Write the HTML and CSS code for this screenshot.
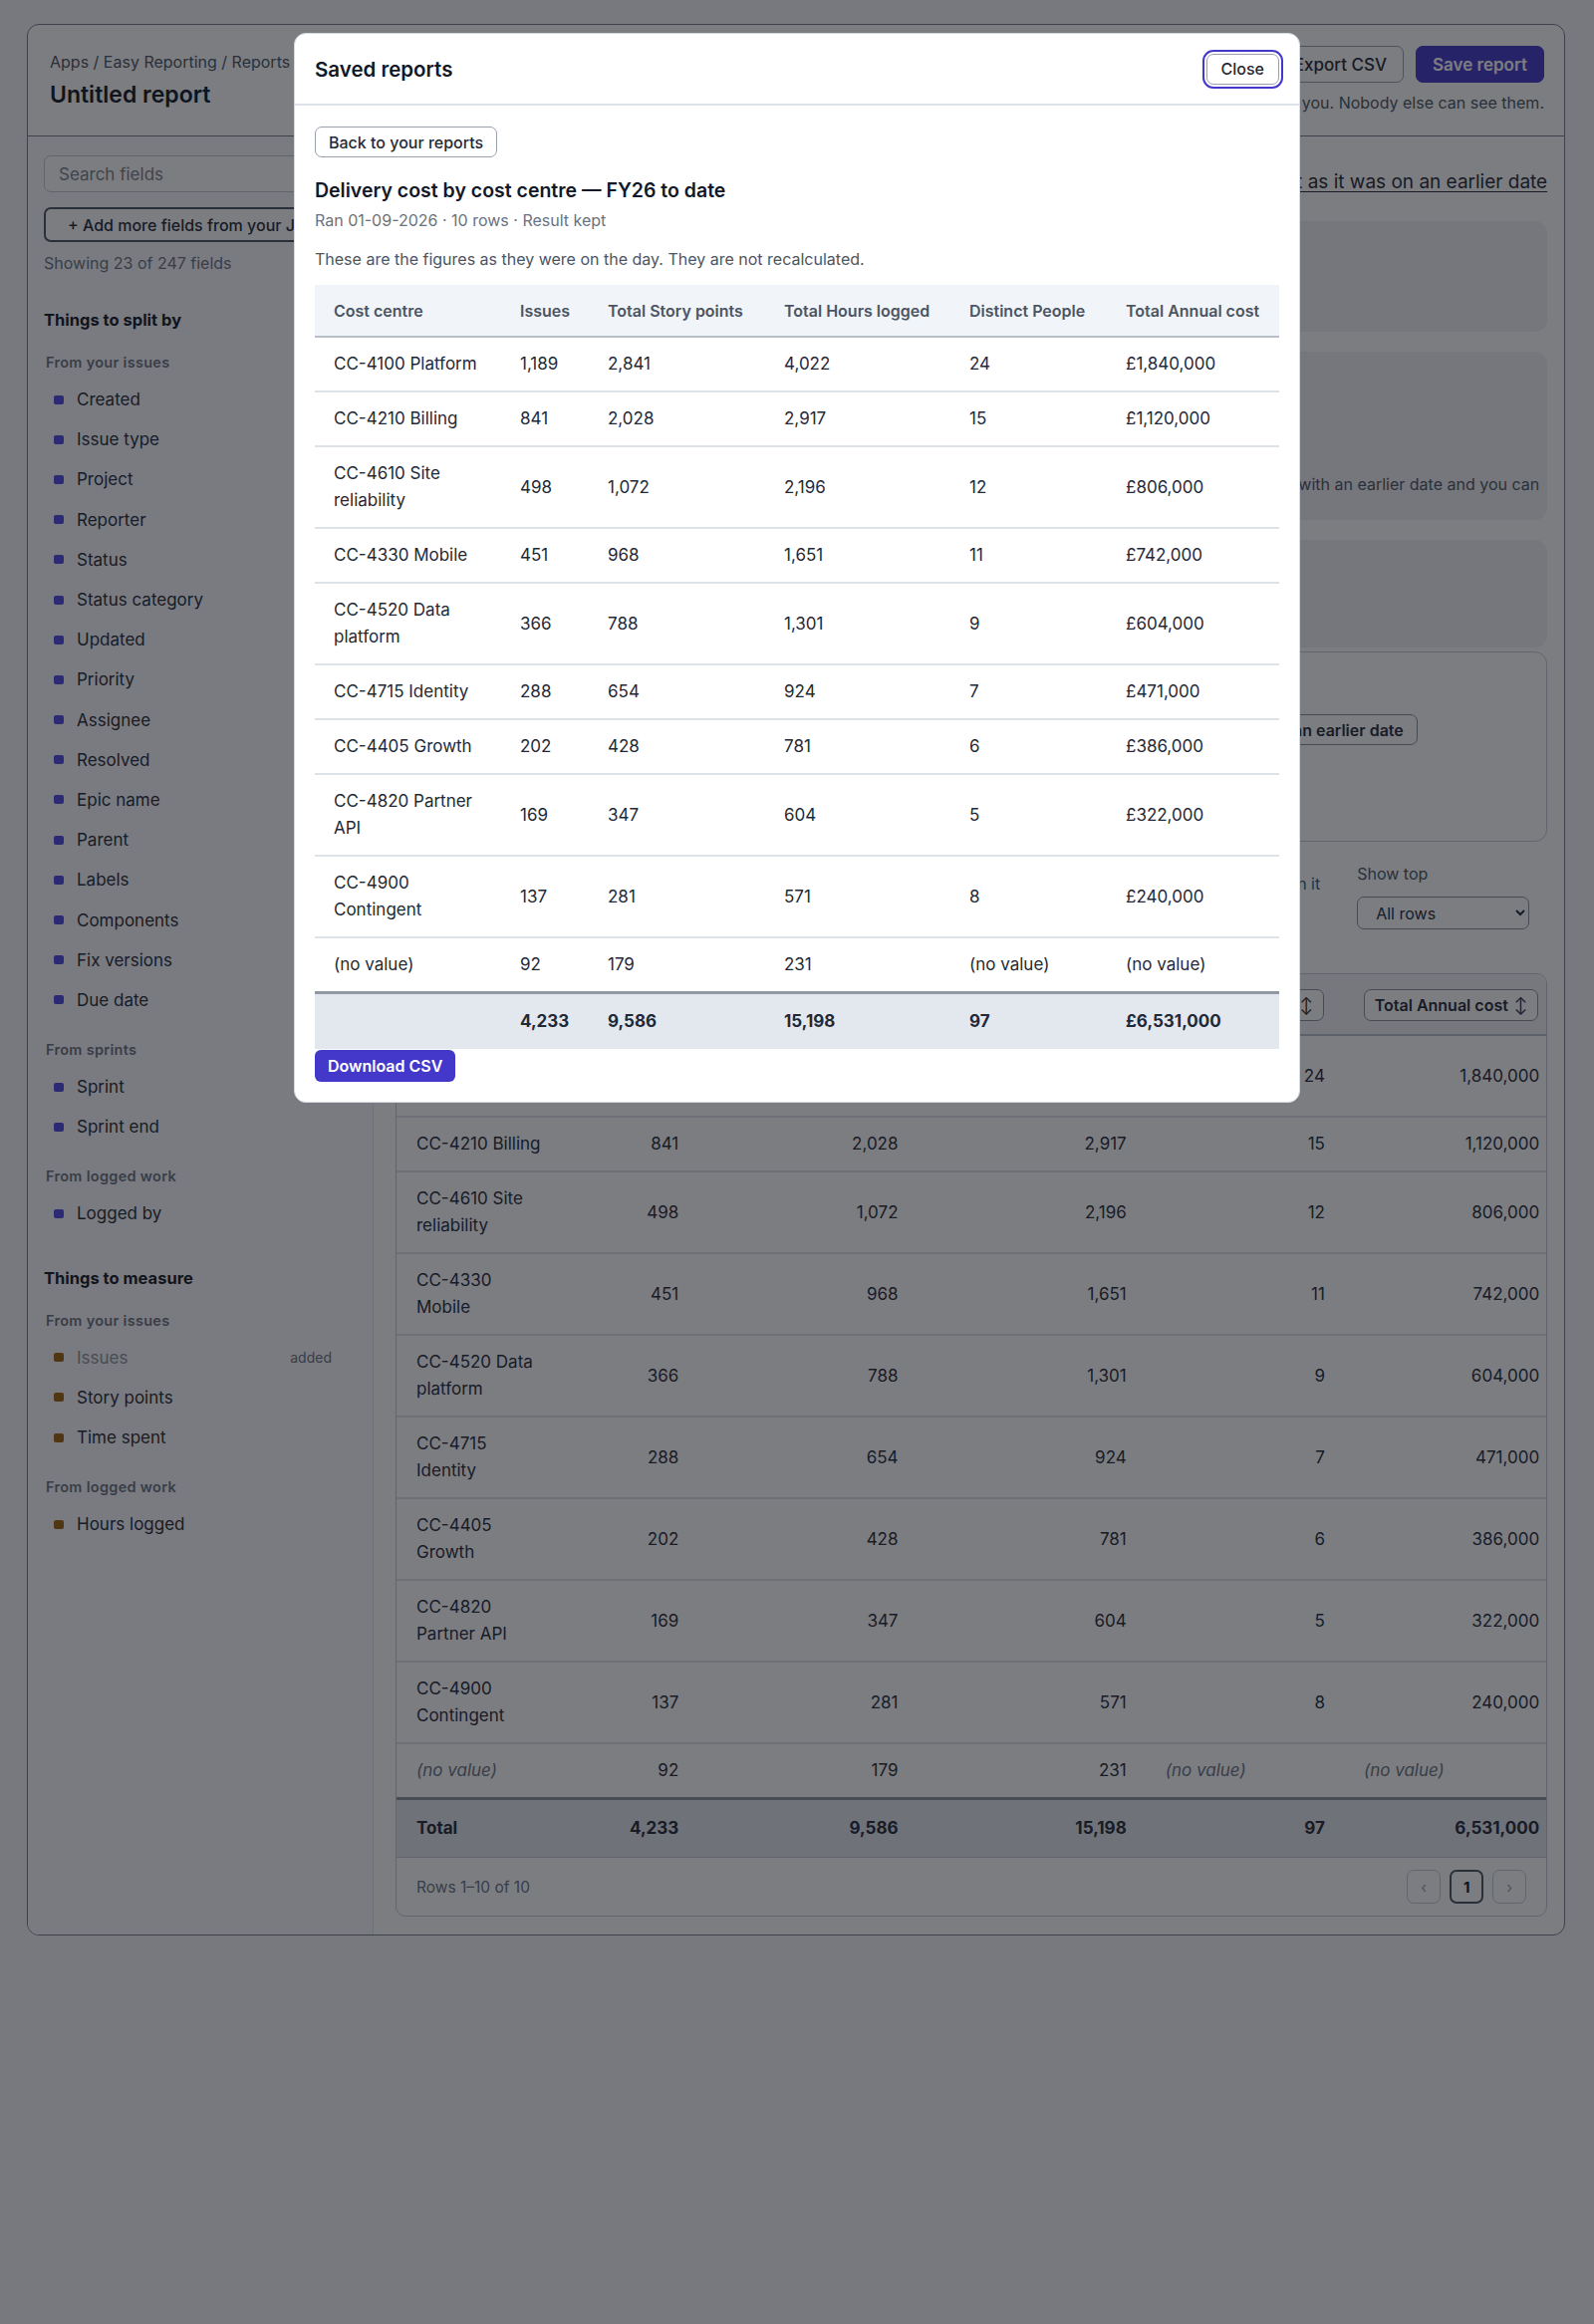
FILE: index.html
```html
<!DOCTYPE html>
<html lang="en">
<head>
    <meta charset="UTF-8">
    <meta name="viewport" content="width=device-width, initial-scale=1.0">
    <title>Untitled report - Easy Reporting</title>
    <link rel="stylesheet" href="styles.css">
</head>
<body>
    <div class="app">
        <header class="app-head">
            <div class="head-left">
                <div class="crumbs">Apps / Easy Reporting / Reports</div>
                <h1>Untitled report</h1>
            </div>
            <div class="head-right">
                <div class="head-actions">
                    <button class="btn">Saved reports</button>
                    <button class="btn">Export CSV</button>
                    <button class="btn btn-primary">Save report</button>
                </div>
                <p class="head-note">Saved reports are only visible to you. Nobody else can see them.</p>
            </div>
        </header>

        <div class="app-body">
            <aside class="fields">
                <input class="search" type="text" placeholder="Search fields">
                <button class="add-fields">+ Add more fields from your Jira site</button>
                <p class="field-count">Showing 23 of 247 fields</p>

                <section class="field-section">
                    <h3>Things to split by</h3>
                    <h4>From your issues</h4>
                    <ul class="field-list split">
                        <li><span class="dot"></span>Created</li>
                        <li><span class="dot"></span>Issue type</li>
                        <li><span class="dot"></span>Project</li>
                        <li><span class="dot"></span>Reporter</li>
                        <li><span class="dot"></span>Status</li>
                        <li><span class="dot"></span>Status category</li>
                        <li><span class="dot"></span>Updated</li>
                        <li><span class="dot"></span>Priority</li>
                        <li><span class="dot"></span>Assignee</li>
                        <li><span class="dot"></span>Resolved</li>
                        <li><span class="dot"></span>Epic name</li>
                        <li><span class="dot"></span>Parent</li>
                        <li><span class="dot"></span>Labels</li>
                        <li><span class="dot"></span>Components</li>
                        <li><span class="dot"></span>Fix versions</li>
                        <li><span class="dot"></span>Due date</li>
                    </ul>
                    <h4>From sprints</h4>
                    <ul class="field-list split">
                        <li><span class="dot"></span>Sprint</li>
                        <li><span class="dot"></span>Sprint end</li>
                    </ul>
                    <h4>From logged work</h4>
                    <ul class="field-list split">
                        <li><span class="dot"></span>Logged by</li>
                    </ul>
                </section>

                <section class="field-section">
                    <h3>Things to measure</h3>
                    <h4>From your issues</h4>
                    <ul class="field-list measure">
                        <li class="is-added"><span class="dot"></span>Issues<span class="added">added</span></li>
                        <li><span class="dot"></span>Story points</li>
                        <li><span class="dot"></span>Time spent</li>
                    </ul>
                    <h4>From logged work</h4>
                    <ul class="field-list measure">
                        <li><span class="dot"></span>Hours logged</li>
                    </ul>
                </section>
            </aside>

            <main class="report">
                <div class="report-top">
                    <span class="range">Figures from 01-04-2025 to today</span>
                    <a class="past-link" href="#">See this report as it was on an earlier date</a>
                </div>

                <div class="card card-split">
                    <h3>Split by</h3>
                    <p>Cost centre</p>
                </div>

                <div class="card card-measure">
                    <h3>Measures</h3>
                    <p>Pick up to six things to measure for each row.</p>
                    <div class="chips">
                        <span class="chip">Issues</span><span class="chip">Total Story points</span><span class="chip">Total Hours logged</span>
                        <span class="chip">Distinct People</span><span class="chip">Total Annual cost</span>
                    </div>
                    <p class="snapshot-note">Saved reports keep all the figures from the day they ran. Running one again uses today's data unless you run it again with an earlier date and you can<br>compare the two.</p>
                </div>

                <div class="card-pair">
                    <div class="card card-filter">
                        <h3>Filters</h3>
                        <p>Project is Delivery, Resolved is in FY26</p>
                    </div>
                    <div class="card card-date">
                        <h3>Report date</h3>
                        <div class="date-row">
                            <input class="date-input" type="text" value="Today">
                            <button class="btn">Show as it was on an earlier date</button>
                        </div>
                    </div>
                </div>

                <div class="controls">
                    <label class="check"><input type="checkbox"> Keep rows with nothing in it</label>
                    <div class="show-top">
                        <span>Show top</span>
                        <select>
                            <option>All rows</option>
                        </select>
                    </div>
                </div>

                <div class="result">
                    <table class="result-table">
                        <colgroup>
                            <col style="width:163px"><col style="width:127px"><col style="width:220px">
                            <col style="width:229px"><col style="width:199px"><col style="width:215px">
                        </colgroup>
                        <thead>
                            <tr>
                                <th class="first"><button class="sort">Cost centre <span>↕</span></button></th>
                                <th><button class="sort">Issues <span>↕</span></button></th>
                                <th><button class="sort">Total Story points <span>↕</span></button></th>
                                <th><button class="sort">Total Hours logged <span>↕</span></button></th>
                                <th><button class="sort">Distinct People <span>↕</span></button></th>
                                <th><button class="sort">Total Annual cost <span>↕</span></button></th>
                            </tr>
                        </thead>
                        <tbody>
                            <tr><td class="first">CC-4100 Platform</td><td>1,189</td><td>2,841</td><td>4,022</td><td>24</td><td>1,840,000</td></tr>
                            <tr><td class="first">CC-4210 Billing</td><td>841</td><td>2,028</td><td>2,917</td><td>15</td><td>1,120,000</td></tr>
                            <tr><td class="first">CC-4610 Site reliability</td><td>498</td><td>1,072</td><td>2,196</td><td>12</td><td>806,000</td></tr>
                            <tr><td class="first">CC-4330 Mobile</td><td>451</td><td>968</td><td>1,651</td><td>11</td><td>742,000</td></tr>
                            <tr><td class="first">CC-4520 Data platform</td><td>366</td><td>788</td><td>1,301</td><td>9</td><td>604,000</td></tr>
                            <tr><td class="first">CC-4715 Identity</td><td>288</td><td>654</td><td>924</td><td>7</td><td>471,000</td></tr>
                            <tr><td class="first">CC-4405 Growth</td><td>202</td><td>428</td><td>781</td><td>6</td><td>386,000</td></tr>
                            <tr><td class="first">CC-4820 Partner API</td><td>169</td><td>347</td><td>604</td><td>5</td><td>322,000</td></tr>
                            <tr><td class="first">CC-4900 Contingent</td><td>137</td><td>281</td><td>571</td><td>8</td><td>240,000</td></tr>
                            <tr class="no-value-row"><td class="first none">(no value)</td><td>92</td><td>179</td><td>231</td><td class="none">(no value)</td><td class="none">(no value)</td></tr>
                        </tbody>
                        <tfoot>
                            <tr><td class="first">Total</td><td>4,233</td><td>9,586</td><td>15,198</td><td>97</td><td>6,531,000</td></tr>
                        </tfoot>
                    </table>
                    <div class="result-foot">
                        <span>Rows 1–10 of 10</span>
                        <div class="pager">
                            <button class="page">‹</button>
                            <button class="page active">1</button>
                            <button class="page">›</button>
                        </div>
                    </div>
                </div>
            </main>
        </div>
    </div>

    <div class="modal-layer">
        <div class="modal" role="dialog" aria-label="Saved reports">
            <div class="modal-head">
                <h2>Saved reports</h2>
                <button class="btn btn-close">Close</button>
            </div>
            <div class="modal-body">
                <button class="btn btn-back">Back to your reports</button>
                <h3 class="saved-title">Delivery cost by cost centre — FY26 to date</h3>
                <p class="saved-meta">Ran 01-09-2026 · 10 rows · Result kept</p>
                <p class="saved-note">These are the figures as they were on the day. They are not recalculated.</p>
                <table class="saved-table">
                    <colgroup>
                        <col style="width:187px"><col style="width:88px"><col style="width:177px">
                        <col style="width:186px"><col style="width:157px"><col style="width:173px">
                    </colgroup>
                    <thead>
                        <tr><th>Cost centre</th><th>Issues</th><th>Total Story points</th><th>Total Hours logged</th><th>Distinct People</th><th>Total Annual cost</th></tr>
                    </thead>
                    <tbody>
                        <tr><td>CC-4100 Platform</td><td>1,189</td><td>2,841</td><td>4,022</td><td>24</td><td>£1,840,000</td></tr>
                        <tr><td>CC-4210 Billing</td><td>841</td><td>2,028</td><td>2,917</td><td>15</td><td>£1,120,000</td></tr>
                        <tr><td>CC-4610 Site reliability</td><td>498</td><td>1,072</td><td>2,196</td><td>12</td><td>£806,000</td></tr>
                        <tr><td>CC-4330 Mobile</td><td>451</td><td>968</td><td>1,651</td><td>11</td><td>£742,000</td></tr>
                        <tr><td>CC-4520 Data platform</td><td>366</td><td>788</td><td>1,301</td><td>9</td><td>£604,000</td></tr>
                        <tr><td>CC-4715 Identity</td><td>288</td><td>654</td><td>924</td><td>7</td><td>£471,000</td></tr>
                        <tr><td>CC-4405 Growth</td><td>202</td><td>428</td><td>781</td><td>6</td><td>£386,000</td></tr>
                        <tr><td>CC-4820 Partner API</td><td>169</td><td>347</td><td>604</td><td>5</td><td>£322,000</td></tr>
                        <tr><td>CC-4900 Contingent</td><td>137</td><td>281</td><td>571</td><td>8</td><td>£240,000</td></tr>
                        <tr><td>(no value)</td><td>92</td><td>179</td><td>231</td><td>(no value)</td><td>(no value)</td></tr>
                    </tbody>
                    <tfoot>
                        <tr><td></td><td>4,233</td><td>9,586</td><td>15,198</td><td>97</td><td>£6,531,000</td></tr>
                    </tfoot>
                </table>
                <button class="btn btn-download">Download CSV</button>
            </div>
        </div>
    </div>
</body>
</html>
```
FILE: styles.css
```css
* { box-sizing: border-box; }
body { margin: 0; font-family: Inter, "Liberation Sans", sans-serif; color: #1f2937; background: #f6f7f8; min-height: 2333px; }
button, input, select { font-family: inherit; color: inherit; }
h1, h2, h3, h4, p, ul { margin: 0; }
ul { padding: 0; list-style: none; }

.btn { height: 37px; padding: 0 16px; border: 1px solid #9ba1aa; border-radius: 7px; background: #fff; font-size: 17px; font-weight: 500; }
.btn-primary { background: #4338ca; border-color: #4338ca; color: #fff; font-weight: 600; }

/* app frame */
.app { width: 1544px; margin: 24px 0 0 27px; border: 1px solid #767c86; border-radius: 12px; background: #fff; overflow: hidden; }
.app-head { height: 112px; padding: 21px 20px 0 22px; display: flex; justify-content: space-between; border-bottom: 1px solid #767c86; }
.crumbs { margin-top: 6px; font-size: 16px; line-height: 20px; color: #4b5563; }
.app-head h1 { margin-top: 8px; font-size: 23px; line-height: 30px; font-weight: 600; color: #111827; }
.head-right { display: flex; flex-direction: column; align-items: flex-end; }
.head-actions { display: flex; gap: 12px; }
.head-note { margin-top: 10px; font-size: 16px; line-height: 20px; color: #4b5563; }

.app-body { display: grid; grid-template-columns: 347px 1fr; }

/* field picker */
.fields { padding: 19px 17px 20px 16px; background: #fbfbfc; border-right: 1px solid #e3e6ea; }
.search { width: 100%; height: 37px; padding: 0 14px; border: 1px solid #c3c8cf; border-radius: 7px; font-size: 17px; }
.search::placeholder { color: #7b818a; }
.add-fields { width: 100%; height: 35px; margin-top: 15px; padding: 0 22px; text-align: left; white-space: nowrap; overflow: hidden; border: 2px solid #4b5563; border-radius: 7px; background: #fff; font-size: 16px; font-weight: 500; }
.field-count { margin-top: 11px; font-size: 16px; line-height: 20px; color: #6b7280; }
.field-section h3 { margin-top: 37px; font-size: 16.5px; line-height: 20px; font-weight: 700; color: #111827; }
.field-section + .field-section h3 { margin-top: 34px; }
.field-section h4 { margin: 21px 0 8px 2px; font-size: 14.5px; line-height: 18px; font-weight: 600; letter-spacing: 0.3px; color: #6b7280; }
.field-section h3 + h4 { margin-top: 24px; }
.field-list li { display: flex; align-items: center; height: 40.2px; padding-left: 10px; font-size: 17px; color: #1f2937; }
.dot { width: 10px; height: 9px; margin-right: 13px; border-radius: 2px; background: #4f46e5; }
.measure .dot { background: #a0620c; }
.field-list .is-added { color: #8c929b; }
.added { margin-left: auto; margin-right: 24px; font-size: 14px; color: #6b7280; }

/* report area */
.report { padding: 25px 20px 18px 22px; display: flex; flex-direction: column; gap: 20px; }
.report-top { height: 40px; display: flex; justify-content: space-between; align-items: center; }
.range { font-size: 16px; color: #4b5563; }
.past-link { font-size: 19px; color: #1f2937; text-decoration: underline; text-underline-offset: 3px; }
.card { border-radius: 12px; background: #eff1f4; padding: 18px 8px 16px 20px; }
.card h3 { font-size: 16px; font-weight: 600; line-height: 22px; }
.card p { margin-top: 6px; font-size: 16px; line-height: 22px; color: #4b5563; }
.chips { display: flex; gap: 8px; margin-top: 10px; }
.chip { height: 32px; padding: 0 12px; line-height: 30px; border: 1px solid #c6cbd2; border-radius: 16px; background: #fff; font-size: 15px; }
.card .snapshot-note { margin-top: 12px; white-space: nowrap; }
.card-split { height: 111px; }
.card-measure { height: 169px; overflow: hidden; }
.card-pair { display: flex; flex-direction: column; gap: 4px; }
.card-filter { height: 108px; }
.card-date { height: 191px; background: #fff; border: 1px solid #c6cbd2; }
.date-row { display: flex; gap: 12px; margin-top: 22px; }
.date-input { width: 712px; height: 31px; padding: 0 12px; border: 1px solid #c3c8cf; border-radius: 7px; font-size: 16px; }
.date-row .btn { height: 31px; padding: 0 13px; font-size: 16px; font-weight: 600; border-color: #8b9099; }

.controls { display: flex; justify-content: flex-end; align-items: flex-start; gap: 37px; padding-right: 18px; margin-top: 2px; margin-bottom: 24px; }
.check { margin-top: 10px; font-size: 16px; line-height: 20px; color: #4b5563; }
.show-top { display: flex; flex-direction: column; gap: 13px; font-size: 16px; line-height: 20px; color: #4b5563; }
.show-top select { width: 173px; height: 33px; padding: 0 14px; border: 1px solid #8b9099; border-radius: 7px; background: #fff; font-size: 16px; color: #1f2937; }

/* result table */
.result { border: 1px solid #c6cbd2; border-radius: 10px; overflow: hidden; }
.result-table { width: 100%; border-collapse: collapse; table-layout: fixed; font-size: 17px; }
.result-table th { height: 61px; padding: 0 8px; line-height: 32px; text-align: right; background: #f3f4f6; border-bottom: 2px solid #b9c0c9; }
.result-table th.first { text-align: left; padding-left: 18px; }
.sort { height: 32px; padding: 0 10px; vertical-align: middle; border: 1px solid #8b9099; border-radius: 7px; background: #fff; font-size: 16px; font-weight: 600; white-space: nowrap; }
.sort span { font-weight: 400; margin-left: 2px; }
.result-table td { padding: 13px 7px; line-height: 27px; text-align: right; border-bottom: 2px solid #dfe3e8; }
.result-table td.first { text-align: left; padding: 13px 17px 13px 20px; }
.result-table td.none { text-align: left; padding-left: 32px; font-style: italic; color: #6b7280; }
.result-table td.first.none { padding-left: 20px; }
.result-table .no-value-row td { border-bottom: 3px solid #8c939d; }
.result-table tfoot td { padding: 15px 7px; font-weight: 700; background: #e2e6ec; border-bottom: 1px solid #c6cbd2; }
.result-foot { height: 58px; padding: 0 20px; display: flex; justify-content: space-between; align-items: center; font-size: 15.5px; color: #6b7280; }
.pager { display: flex; gap: 9px; }
.page { width: 34px; height: 34px; border: 1px solid #c6cbd2; border-radius: 7px; background: #fff; font-size: 15px; color: #9ca3af; }
.page.active { border: 2px solid #4b5563; color: #111827; font-weight: 700; }

/* saved reports dialog */
.modal-layer { position: fixed; inset: 0; display: flex; justify-content: center; align-items: flex-start; padding-top: 33px; background: rgba(17, 19, 26, 0.55); }
.modal { width: 1010px; background: #fff; border: 1px solid #d3d9e1; border-radius: 12px; }
.modal-head { height: 72px; padding: 0 20px; display: flex; justify-content: space-between; align-items: center; border-bottom: 2px solid #dde2e8; }
.modal-head h2 { font-size: 20.5px; font-weight: 600; color: #111827; }
.btn-close { height: 31px; padding: 0 14px; font-size: 16px; outline: 2px solid #4338ca; outline-offset: 2px; }
.modal-body { padding: 21px 20px 20px; }
.btn-back { height: 31px; padding: 0 13px; font-size: 16px; }
.saved-title { margin-top: 20px; font-size: 19.5px; line-height: 26px; font-weight: 600; color: #111827; }
.saved-meta { margin-top: 6px; font-size: 16px; line-height: 22px; color: #6b7280; }
.saved-note { margin-top: 17px; font-size: 16px; line-height: 22px; color: #4b5563; }
.saved-table { width: 100%; margin-top: 15px; border-collapse: collapse; table-layout: fixed; font-size: 17px; color: #1f2937; }
.saved-table th { height: 52px; padding: 0 10px 0 19px; text-align: left; font-size: 16px; font-weight: 600; color: #4b5563; background: #f1f4f8; border-bottom: 2px solid #b6bec9; white-space: nowrap; }
.saved-table td { padding: 13px 10px 13px 19px; line-height: 27px; text-align: left; border-bottom: 2px solid #dde2e8; }
.saved-table tbody tr:last-child td { border-bottom: 3px solid #8f98a3; }
.saved-table tfoot td { padding: 14px 10px 14px 19px; font-weight: 700; background: #e3e8ef; border-bottom: 0; }
.btn-download { display: block; height: 32px; margin-top: 1px; padding: 0 13px; border: 0; border-radius: 6px; background: #4338ca; color: #fff; font-size: 16px; font-weight: 600; }
```
